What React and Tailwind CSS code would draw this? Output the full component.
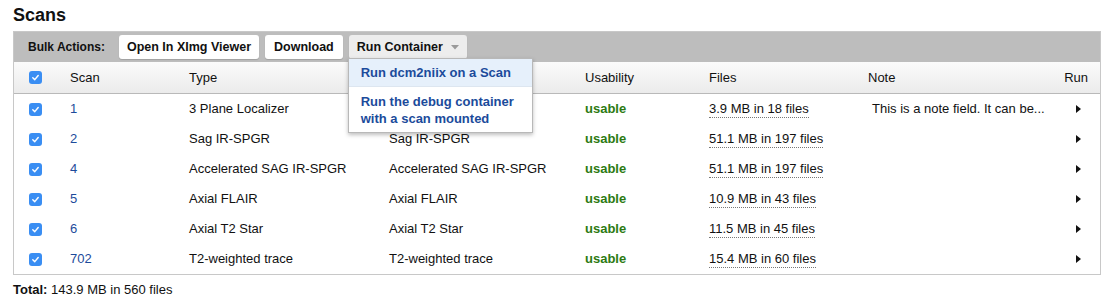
import { useState } from "react";

const rows = [
  { id: "1", type: "3 Plane Localizer", desc: "3 Plane Localizer", files: "3.9 MB in 18 files", note: "This is a note field. It can be..." },
  { id: "2", type: "Sag IR-SPGR", desc: "Sag IR-SPGR", files: "51.1 MB in 197 files", note: "" },
  { id: "4", type: "Accelerated SAG IR-SPGR", desc: "Accelerated SAG IR-SPGR", files: "51.1 MB in 197 files", note: "" },
  { id: "5", type: "Axial FLAIR", desc: "Axial FLAIR", files: "10.9 MB in 43 files", note: "" },
  { id: "6", type: "Axial T2 Star", desc: "Axial T2 Star", files: "11.5 MB in 45 files", note: "" },
  { id: "702", type: "T2-weighted trace", desc: "T2-weighted trace", files: "15.4 MB in 60 files", note: "" },
];

const cols = "grid grid-cols-[43px_119px_200px_196px_124px_159px_1fr_46px] items-center";

function Check() {
  return (
    <span className="inline-flex h-[13px] w-[13px] items-center justify-center rounded-[3px] bg-[#3a8ef3]">
      <svg width="9" height="9" viewBox="0 0 10 10">
        <path d="M2 5.2 L4.2 7.4 L8 2.8" fill="none" stroke="white" strokeWidth="1.6" strokeLinecap="round" strokeLinejoin="round" />
      </svg>
    </span>
  );
}

function Arrow() {
  return (
    <svg width="5" height="8" viewBox="0 0 5 8">
      <path d="M0 0 L5 4 L0 8 Z" fill="#111" />
    </svg>
  );
}

export default function App() {
  const [open] = useState(true);

  return (
    <div className="bg-white pl-[13px] pr-[11px] pt-[3px] text-[13px] text-[#111] font-['Liberation_Sans',Arial,sans-serif]">
      <h2 className="text-[18px] font-bold leading-[24px] mb-[4px]">Scans</h2>

      <div className="border border-[#c8c8c8]">
        <div className="flex items-center gap-[6px] bg-[#bdbdbd] h-[30px] pl-[14px] font-bold">
          <span className="mr-[8px] text-[12px]">Bulk Actions:</span>
          <button className="h-[24px] rounded-[3px] bg-white px-[8px] text-[12.5px] shadow-[0_1px_1px_rgba(0,0,0,0.15)]">
            Open In XImg Viewer
          </button>
          <button className="h-[24px] rounded-[3px] bg-white px-[9px] text-[12.5px] shadow-[0_1px_1px_rgba(0,0,0,0.15)]">
            Download
          </button>
          <div className="relative">
            <button className="flex h-[24px] items-center gap-[8px] rounded-[3px] bg-[#ededed] px-[8px] text-[12.5px] shadow-[0_1px_1px_rgba(0,0,0,0.15)]">
              Run Container
              <svg width="8" height="5" viewBox="0 0 8 5">
                <path d="M0 0 L8 0 L4 4.5 Z" fill="#9a9a9a" />
              </svg>
            </button>
            {open && (
              <div className="absolute left-[-1px] top-[23px] z-10 w-[185px] border border-[#b8b8b8] bg-white shadow-[0_2px_4px_rgba(0,0,0,0.25)] text-[13px] font-bold text-[#1b4b9b]">
                <div className="bg-[#e6f0fb] px-[12px] py-[6px] leading-[15px] border-b border-[#dde6f0]">
                  Run dcm2niix on a Scan
                </div>
                <div className="px-[12px] pt-[6px] pb-[5px] leading-[17px]">
                  Run the debug container
                  <br />
                  with a scan mounted
                </div>
              </div>
            )}
          </div>
        </div>

        <div className={`${cols} h-[32px] bg-gradient-to-b from-[#fbfbfb] to-[#ebebeb] border-b border-[#b9b9b9]`}>
          <div className="flex justify-center">
            <Check />
          </div>
          <div className="pl-[13px]">Scan</div>
          <div className="pl-[13px]">Type</div>
          <div className="pl-[13px]">Series Description</div>
          <div className="pl-[13px]">Usability</div>
          <div className="pl-[13px]">Files</div>
          <div className="pl-[13px]">Note</div>
          <div className="pr-[12px] text-right">Run</div>
        </div>

        {rows.map((r) => (
          <div key={r.id} className={`${cols} h-[30px]`}>
            <div className="flex justify-center">
              <Check />
            </div>
            <div className="pl-[13px] text-[#1d4b9b]">{r.id}</div>
            <div className="pl-[13px]">{r.type}</div>
            <div className="pl-[13px]">{r.desc}</div>
            <div className="pl-[13px] font-bold text-[#2d7a12]">usable</div>
            <div className="pl-[13px]">
              <span className="border-b border-dotted border-[#777] pb-[1px]">{r.files}</span>
            </div>
            <div className="pl-[17px] whitespace-nowrap">{r.note}</div>
            <div className="flex justify-center pl-[2px]">
              <Arrow />
            </div>
          </div>
        ))}
      </div>

      <div className="mt-[7px] leading-[16px]">
        <span className="font-bold">Total:</span>{" "}
        <span className="border-b border-dotted border-[#777] pb-[1px]">143.9 MB in 560 files</span>
      </div>
    </div>
  );
}
